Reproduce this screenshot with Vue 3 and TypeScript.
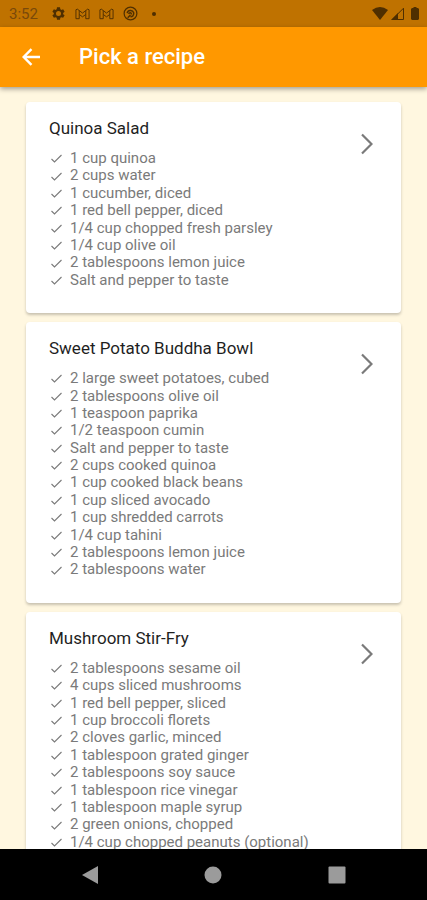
<script setup lang="ts">
interface Recipe {
  name: string
  ingredients: string[]
}

const recipes: Recipe[] = [
  {
    name: 'Quinoa Salad',
    ingredients: [
      '1 cup quinoa',
      '2 cups water',
      '1 cucumber, diced',
      '1 red bell pepper, diced',
      '1/4 cup chopped fresh parsley',
      '1/4 cup olive oil',
      '2 tablespoons lemon juice',
      'Salt and pepper to taste',
    ],
  },
  {
    name: 'Sweet Potato Buddha Bowl',
    ingredients: [
      '2 large sweet potatoes, cubed',
      '2 tablespoons olive oil',
      '1 teaspoon paprika',
      '1/2 teaspoon cumin',
      'Salt and pepper to taste',
      '2 cups cooked quinoa',
      '1 cup cooked black beans',
      '1 cup sliced avocado',
      '1 cup shredded carrots',
      '1/4 cup tahini',
      '2 tablespoons lemon juice',
      '2 tablespoons water',
    ],
  },
  {
    name: 'Mushroom Stir-Fry',
    ingredients: [
      '2 tablespoons sesame oil',
      '4 cups sliced mushrooms',
      '1 red bell pepper, sliced',
      '1 cup broccoli florets',
      '2 cloves garlic, minced',
      '1 tablespoon grated ginger',
      '2 tablespoons soy sauce',
      '1 tablespoon rice vinegar',
      '1 tablespoon maple syrup',
      '2 green onions, chopped',
      '1/4 cup chopped peanuts (optional)',
    ],
  },
]
</script>

<template>
  <div class="screen">
    <div class="status">
      <span class="time">3:52</span>
      <div class="notices">
        <svg class="icon" viewBox="0 0 24 24" aria-hidden="true">
          <path
            fill="currentColor"
            fill-rule="evenodd"
            d="M19.4 13a7.6 7.6 0 0 0 0-2l2.4-1.8-2.4-4.1-2.8 1.1a7.5 7.5 0 0 0-1.7-1L14.4 2H9.6l-.5 3.200a7.5 7.5 0 0 0-1.7 1L4.6 5.100 2.200 9.200 4.600 11a7.600 7.600 0 0 0 0 2l-2.400 1.800 2.400 4.100 2.800-1.100a7.500 7.500 0 0 0 1.700 1l.5 3.200h4.800l.5-3.200a7.500 7.500 0 0 0 1.700-1l2.800 1.100 2.400-4.100zM12 16a4 4 0 1 1 0-8 4 4 0 0 1 0 8z"
          />
        </svg>
        <svg v-for="n in 2" :key="n" class="mail" viewBox="0 0 16 12" aria-hidden="true">
          <path
            fill="none"
            stroke="currentColor"
            stroke-linejoin="round"
            d="M1 1.500 2.500.8 8 5 13.500.8 15 1.500V11h-3.500V6.500L8 9 4.500 6.500V11H1zM4.500 6.500V2.500M11.500 6.500V2.500"
          />
        </svg>
        <svg class="icon" viewBox="0 0 16 16" aria-hidden="true">
          <g fill="none" stroke="currentColor">
            <circle cx="8" cy="8" r="6.800" stroke-width="1.300" />
            <path stroke-width="1.600" d="M4.500 7.500C5 4.500 10 3.500 11.300 7c.9 3-1.500 4.500-3.300 4.500M6 8.500c1-2 3-1.500 3 .5M5 12.500 8 9.500" />
          </g>
        </svg>
        <span class="dot"></span>
      </div>
      <div class="signals">
        <svg class="wifi" viewBox="0 0 16 13" aria-hidden="true">
          <path fill="currentColor" d="M0 3Q8-3 16 3L8 13z" />
        </svg>
        <svg class="cell" viewBox="0 0 13 13" aria-hidden="true">
          <path fill="currentColor" d="M0 13 7 6v7z" />
          <path fill="none" stroke="currentColor" d="M1.200 12.500 12.500 1.200v11.300z" />
        </svg>
        <svg class="battery" viewBox="0 0 8 13" aria-hidden="true">
          <path fill="currentColor" d="M2.500 0h3v1H7l1 1v10l-1 1H1l-1-1V2l1-1h1.500z" />
        </svg>
      </div>
    </div>

    <header class="bar">
      <button class="back" type="button" aria-label="Back">
        <svg viewBox="0 0 18 18" aria-hidden="true">
          <path fill="none" stroke="currentColor" stroke-width="2.400" d="M18 9H2M9.500 1.200 1.700 9l7.800 7.800" />
        </svg>
      </button>
      <h1>Pick a recipe</h1>
    </header>

    <main class="list">
      <article v-for="recipe in recipes" :key="recipe.name" class="card">
        <div class="details">
          <h2>{{ recipe.name }}</h2>
          <ul>
            <li v-for="item in recipe.ingredients" :key="item">
              <svg class="check" viewBox="0 0 11 9" aria-hidden="true">
                <path fill="none" stroke="currentColor" stroke-width="1.100" d="M.5 5 3.500 8 10.500 1" />
              </svg>
              <span>{{ item }}</span>
            </li>
          </ul>
        </div>
        <button class="open" type="button" :aria-label="'Open ' + recipe.name">
          <svg viewBox="0 0 12 22" aria-hidden="true">
            <path fill="none" stroke="currentColor" stroke-width="2.200" d="m1 1.500 9.500 9.500L1 20.500" />
          </svg>
        </button>
      </article>
    </main>

    <nav class="system" aria-label="System">
      <button type="button" aria-label="Go back">
        <svg viewBox="0 0 18 18" aria-hidden="true"><path fill="currentColor" d="M17 0v18L1 9z" /></svg>
      </button>
      <button type="button" aria-label="Home">
        <svg viewBox="0 0 18 18" aria-hidden="true"><circle cx="9" cy="9" r="8.500" fill="currentColor" /></svg>
      </button>
      <button type="button" aria-label="Recent apps">
        <svg viewBox="0 0 18 18" aria-hidden="true"><rect x=".5" y=".5" width="17" height="17" rx="1" fill="currentColor" /></svg>
      </button>
    </nav>
  </div>
</template>

<style>
body {
  margin: 0;
  background: #000;
}
</style>

<style scoped>
.screen {
  display: flex;
  flex-direction: column;
  height: 100vh;
  background: #fff7e0;
  font-family: Roboto, "Liberation Sans", sans-serif;
}

button {
  display: flex;
  align-items: center;
  justify-content: center;
  padding: 0;
  border: 0;
  background: none;
  color: inherit;
}

h1,
h2,
ul {
  margin: 0;
  padding: 0;
}

svg {
  display: block;
  flex: none;
}

.status {
  display: flex;
  flex: none;
  align-items: center;
  height: 27px;
  padding: 0 8px 0 9px;
  background: #bf7200;
  color: #4f2f00;
}

.time {
  font-size: 15px;
  line-height: 18px;
  color: #79490a;
}

.notices {
  display: flex;
  align-items: center;
  gap: 9px;
  margin-left: 13px;
}

.icon {
  width: 15px;
  height: 15px;
}

.mail {
  width: 15px;
  height: 12px;
}

.dot {
  width: 4px;
  height: 4px;
  margin-left: 5px;
  border-radius: 50%;
  background: currentColor;
}

.signals {
  display: flex;
  align-items: center;
  gap: 3px;
  margin-left: auto;
}

.wifi {
  width: 16px;
  height: 13px;
}

.cell {
  width: 13px;
  height: 13px;
}

.battery {
  width: 8px;
  height: 13px;
  margin-left: 4px;
}

.bar {
  display: flex;
  flex: none;
  align-items: center;
  gap: 32px;
  height: 60px;
  padding: 0 15px;
  background: #ff9800;
  color: #fff;
  box-shadow: 0 2px 5px rgba(0, 0, 0, 0.36);
  z-index: 1;
}

.back {
  width: 32px;
  height: 40px;
}

.back svg {
  width: 18px;
  height: 18px;
}

h1 {
  font-size: 22px;
  line-height: 28px;
  font-weight: 500;
}

.list {
  display: flex;
  flex: 1;
  flex-direction: column;
  gap: 9px;
  min-height: 0;
  padding: 15px 26px 0;
  overflow-y: auto;
  scrollbar-width: none;
}

.card {
  display: flex;
  flex: none;
  justify-content: space-between;
  padding: 16px 21px 24px 23px;
  border-radius: 4px;
  background: #fff;
  box-shadow: 0 2px 3px rgba(0, 0, 0, 0.22);
}

.details {
  min-width: 0;
}

h2 {
  margin-bottom: 12px;
  font-size: 17px;
  line-height: 20px;
  font-weight: 400;
  color: #1f1f1f;
}

ul {
  list-style: none;
  font-size: 15px;
  line-height: 1.16;
  color: #7a7a7a;
}

li {
  display: flex;
  align-items: center;
  gap: 8px;
}

.check {
  width: 11px;
  height: 9px;
  margin-left: 2px;
}

.open {
  flex: none;
  align-self: flex-start;
  width: 26px;
  height: 52px;
  color: #7a7a7a;
}

.open svg {
  width: 12px;
  height: 22px;
}

.system {
  display: flex;
  flex: none;
  align-items: center;
  justify-content: space-around;
  height: 51px;
  padding: 0 28px;
  background: #000;
  color: #9b9b9b;
  z-index: 1;
}

.system button {
  width: 48px;
  height: 48px;
}

.system svg {
  width: 18px;
  height: 18px;
}
</style>
